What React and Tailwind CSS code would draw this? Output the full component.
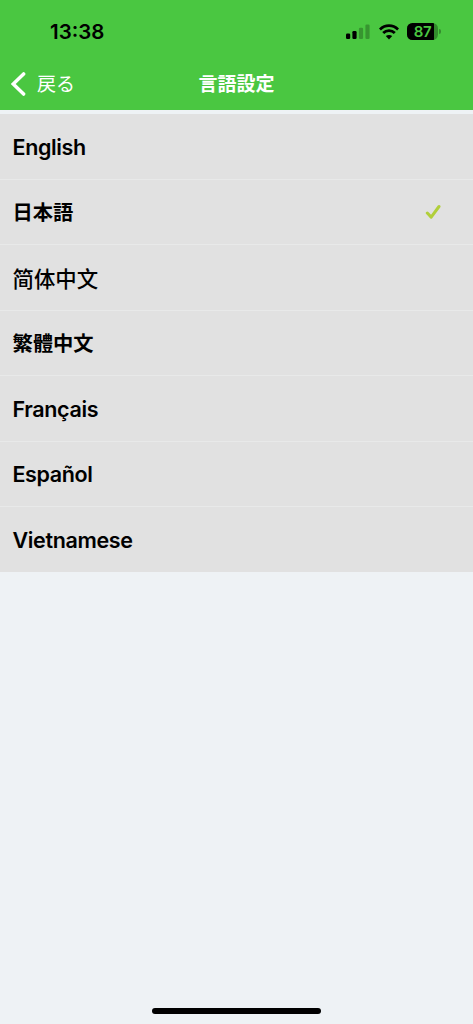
import { useState } from "react";

const languages = [
  { code: "en", label: "English", className: "font-semibold text-[21.5px] tracking-[-0.35px]" },
  { code: "ja", label: "日本語", className: "font-bold text-[20.3px] pt-0.5" },
  {
    code: "zh-Hans",
    label: "简体中文",
    className: "font-medium text-[21.4px] font-['Noto_Sans_CJK_SC',sans-serif]",
  },
  { code: "zh-Hant", label: "繁體中文", className: "font-bold text-[20.3px] pt-0.5" },
  { code: "fr", label: "Français", className: "font-semibold text-[21.5px] tracking-[-0.35px]" },
  { code: "es", label: "Español", className: "font-semibold text-[21.5px] tracking-[-0.4px] pb-px" },
  { code: "vi", label: "Vietnamese", className: "font-semibold text-[21.5px] tracking-[-0.35px]" },
];

function SignalIcon() {
  return (
    <svg width="24" height="16" viewBox="0 0 24 16">
      <rect x="0" y="9.5" width="4.2" height="5.5" rx="1.2" />
      <rect x="6.4" y="7" width="4.2" height="8" rx="1.2" />
      <rect x="12.9" y="3.7" width="4.2" height="11.3" rx="1.2" opacity="0.25" />
      <rect x="19.4" y="0.5" width="4.2" height="14.5" rx="1.2" opacity="0.25" />
    </svg>
  );
}

function WifiIcon() {
  return (
    <svg width="20" height="16" viewBox="0 0 20 16">
      <g fill="none" stroke="#000" strokeWidth="2.8">
        <path d="M0.9 5.5C6.1 0.4 13.9 0.4 19.1 5.5" />
        <path d="M4.2 9C7.5 5.7 12.5 5.7 15.8 9" />
      </g>
      <path d="M10 15.4 6.8 12.1C8.6 10.5 11.4 10.5 13.2 12.1Z" />
    </svg>
  );
}

function BatteryIcon() {
  return (
    <div className="flex items-center">
      <div className="relative flex h-[17px] w-[31px] items-center justify-center overflow-hidden rounded-[5.5px] bg-black/30">
        <div className="absolute inset-y-0 left-0 w-[26.5px] bg-black" />
        <span className="relative text-[15px] leading-none font-semibold tracking-[-0.3px] text-[#4ac741]">
          87
        </span>
      </div>
      <div className="ml-px h-[5px] w-[2px] rounded-r-full bg-black/30" />
    </div>
  );
}

function StatusBar() {
  return (
    <div className="flex h-[63px] items-center justify-between pr-[32px] pl-[50px]">
      <span className="pt-0.5 text-[20.5px] font-semibold">13:38</span>
      <div className="flex items-center">
        <SignalIcon />
        <div className="ml-[9px]">
          <WifiIcon />
        </div>
        <div className="ml-[8px]">
          <BatteryIcon />
        </div>
      </div>
    </div>
  );
}

function NavBar() {
  return (
    <nav className="grid h-[47px] grid-cols-[1fr_auto_1fr] items-center pb-[5px] text-white">
      <button className="flex items-center gap-[11px] pl-[11px] text-[19px]">
        <svg
          width="15"
          height="24"
          viewBox="0 0 15 24"
          fill="none"
          stroke="currentColor"
          strokeWidth="3.5"
          strokeLinecap="round"
        >
          <path d="M12.6 1.9 2.2 12 12.6 22.1" />
        </svg>
        <span className="pt-0.5">戻る</span>
      </button>
      <h1 className="pt-0.5 text-[19px] font-bold">言語設定</h1>
    </nav>
  );
}

function CheckIcon() {
  return (
    <svg
      width="16"
      height="16"
      viewBox="0 0 16 16"
      fill="none"
      stroke="#b1cf3a"
      strokeWidth="3"
      strokeLinecap="round"
      strokeLinejoin="round"
    >
      <path d="M2.3 9 6.2 13.1 14 2.5" />
    </svg>
  );
}

export default function App() {
  const [selected, setSelected] = useState("ja");

  return (
    <div className="flex h-screen flex-col bg-[#eef2f5] font-['Inter','Noto_Sans_CJK_JP',sans-serif] text-black">
      <header className="bg-[#4ac741]">
        <StatusBar />
        <NavBar />
      </header>

      {/* Language list */}
      <ul className="mt-1 flex h-[458px] flex-col divide-y divide-[#e8e9e9] bg-[#e1e1e1]">
        {languages.map((lang) => (
          <li key={lang.code} className="flex-1">
            <button
              onClick={() => setSelected(lang.code)}
              className="flex h-full w-full items-center justify-between pt-px pr-8 pl-[12.5px] text-left"
            >
              <span className={lang.className}>{lang.label}</span>
              {selected === lang.code && <CheckIcon />}
            </button>
          </li>
        ))}
      </ul>

      {/* Home indicator */}
      <div className="mx-auto mt-auto mb-[10px] h-[6px] w-[169px] rounded-full bg-black" />
    </div>
  );
}
